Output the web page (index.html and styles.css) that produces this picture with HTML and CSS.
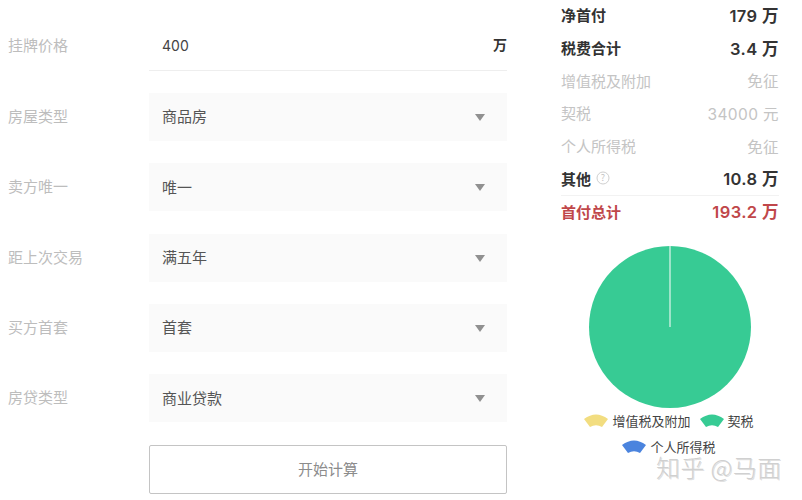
FILE: index.html
```html
<!DOCTYPE html>
<html lang="zh">
<head>
<meta charset="utf-8">
<title>税费计算器</title>
<link rel="stylesheet" href="styles.css">
</head>
<body>
<main class="page">
  <form class="form">
    <div class="row">
      <span class="label">挂牌价格</span>
      <div class="field input"><span class="num">400</span><b class="unit">万</b></div>
    </div>
    <div class="row">
      <span class="label">房屋类型</span>
      <div class="field select"><span>商品房</span><i class="arrow"></i></div>
    </div>
    <div class="row">
      <span class="label">卖方唯一</span>
      <div class="field select"><span>唯一</span><i class="arrow"></i></div>
    </div>
    <div class="row">
      <span class="label">距上次交易</span>
      <div class="field select"><span>满五年</span><i class="arrow"></i></div>
    </div>
    <div class="row">
      <span class="label">买方首套</span>
      <div class="field select"><span>首套</span><i class="arrow"></i></div>
    </div>
    <div class="row">
      <span class="label">房贷类型</span>
      <div class="field select"><span>商业贷款</span><i class="arrow"></i></div>
    </div>
    <div class="row">
      <span class="label"></span>
      <div class="button">开始计算</div>
    </div>
  </form>
  <section class="result">
    <div class="line strong"><span>净首付</span><span class="val">179 万</span></div>
    <div class="line strong"><span>税费合计</span><span class="val">3.4 万</span></div>
    <div class="line muted"><span>增值税及附加</span><span class="val">免征</span></div>
    <div class="line muted"><span>契税</span><span class="val">34000 元</span></div>
    <div class="line muted"><span>个人所得税</span><span class="val">免征</span></div>
    <div class="line strong"><span class="with-help">其他<svg class="help" viewBox="0 0 14 14"><circle cx="7" cy="7" r="6" fill="none" stroke="#cfcfcf" stroke-width="1"/><text x="7" y="10" text-anchor="middle" class="help-q">?</text></svg></span><span class="val">10.8 万</span></div>
    <div class="line total"><span>首付总计</span><span class="val">193.2 万</span></div>
    <svg class="pie" viewBox="0 0 164 164" width="164" height="164">
      <circle cx="82" cy="82" r="81" fill="#37cb94"/>
      <line x1="82" y1="1" x2="82" y2="82" stroke="#c9f0e0" stroke-width="1.4"/>
    </svg>
    <div class="legend">
      <span class="item"><svg class="fan" viewBox="0 0 24 14"><path d="M0 5Q12 -4 24 5L18 13Q12 9.500 6 13Z" fill="#f2dd80"/></svg>增值税及附加</span>
      <span class="item"><svg class="fan" viewBox="0 0 24 14"><path d="M0 5Q12 -4 24 5L18 13Q12 9.500 6 13Z" fill="#37cb94"/></svg>契税</span>
      <span class="item"><svg class="fan" viewBox="0 0 24 14"><path d="M0 5Q12 -4 24 5L18 13Q12 9.500 6 13Z" fill="#4b84de"/></svg>个人所得税</span>
    </div>
  </section>
  <div class="watermark">知乎 @马面</div>
</main>
</body>
</html>
```
FILE: styles.css
```css
* { box-sizing: border-box; }
html, body { margin: 0; padding: 0; background: #fff; }
body {
  width: 802px;
  height: 500px;
  overflow: hidden;
  font-family: "Noto Sans CJK SC", "Noto Sans", sans-serif;
  color: #444;
}
.page { position: relative; display: flex; width: 802px; height: 500px; overflow: hidden; }

.form {
  width: 499px;
  margin-left: 8px;
  padding-top: 22.4px;
  display: flex;
  flex-direction: column;
  gap: 22.4px;
  flex: none;
}
.row { display: flex; align-items: center; height: 48px; }
.label { width: 141px; flex: none; font-size: 15px; color: #bdbdbd; padding-bottom: 3px; }
.field {
  flex: 1;
  height: 48px;
  display: flex;
  align-items: center;
  justify-content: space-between;
  font-size: 15px;
  color: #555;
}
.field > span { padding-bottom: 2px; }
.input { height: 49px; border-bottom: 1px solid #eeeeee; padding: 0 0 0 13px; }
.field > .num { font-family: "Inter", sans-serif; font-size: 14px; color: #444; padding-bottom: 0; }
.unit { font-size: 14px; font-weight: 700; color: #333; padding-bottom: 3px; }
.select { background: #fafafa; padding: 0 22px 0 13px; }
.arrow {
  width: 0;
  height: 0;
  border-left: 5.500px solid transparent;
  border-right: 5.500px solid transparent;
  border-top: 7px solid #909090;
  margin-top: 1px;
}
.button {
  flex: 1;
  height: 49px;
  margin-top: 1px;
  padding-bottom: 2px;
  border: 1px solid #c4c4c4;
  border-radius: 2px;
  display: flex;
  align-items: center;
  justify-content: center;
  font-size: 15px;
  color: #8c8c8c;
}

.result {
  width: 218px;
  margin-left: 54px;
  margin-top: -1.500px;
  flex: none;
  display: flex;
  flex-direction: column;
  align-items: stretch;
}
.line {
  display: flex;
  justify-content: space-between;
  align-items: center;
  height: 32.700px;
  font-size: 15px;
  flex: none;
}
.val { font-family: "Inter", "Noto Sans CJK SC", sans-serif; font-size: 15.500px; letter-spacing: 0.4px; }
.strong { color: #333; font-weight: 700; }
.strong .val, .total .val { font-weight: 600; font-size: 16.500px; }
.muted { color: #c4c4c4; font-weight: 400; }
.total { color: #c0474a; font-weight: 700; border-top: 1px solid #f2f2f2; }
.with-help { display: flex; align-items: center; gap: 5px; }
.help { width: 14px; height: 14px; }
.help-q { font-size: 9px; font-weight: 400; fill: #c4c4c4; }

.pie { align-self: center; margin-top: 18px; flex: none; }
.legend {
  display: flex;
  flex-wrap: wrap;
  justify-content: center;
  column-gap: 9px;
  row-gap: 8px;
  width: 240px;
  margin: 3px 0 0 -12px;
  font-size: 13px;
  color: #444;
}
.item { display: flex; align-items: center; gap: 4px; line-height: 18px; white-space: nowrap; }
.fan { width: 24px; height: 14px; }

.watermark {
  position: absolute;
  left: 656px;
  top: 457px;
  font-size: 24px;
  font-weight: 300;
  line-height: 20px;
  letter-spacing: 0.4px;
  white-space: nowrap;
  color: #d0d0d0;
  text-shadow: 1px 1px 0 rgba(150, 150, 150, 0.3);
}
```
